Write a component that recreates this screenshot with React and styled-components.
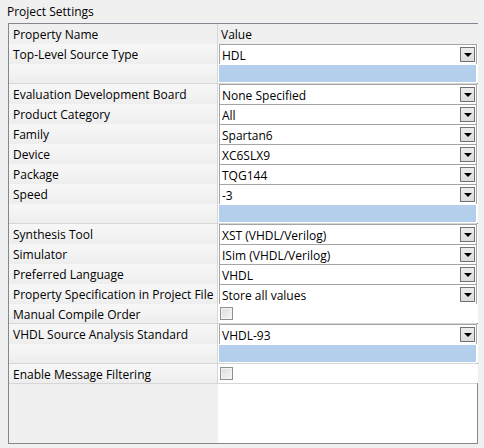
import React from "react";
import styled, { createGlobalStyle } from "styled-components";

const GlobalStyle = createGlobalStyle`
  html, body { margin: 0; padding: 0; background: #f0f0f0; }
  body {
    font-family: "Open Sans", "Liberation Sans", sans-serif;
    font-size: 12px;
    color: #000;
  }
`;

const Panel = styled.div`
  width: 484px;
  height: 448px;
  box-sizing: border-box;
  padding: 3px 6px 4px 8px;
  display: flex;
  flex-direction: column;
`;

const Title = styled.div`
  height: 20px;
  line-height: 17px;
  margin-left: -1px;
`;

const Frame = styled.div`
  flex: 1;
  border: 1px solid #828790;
  display: flex;
  flex-direction: column;
  background: #fff;
`;

const Row = styled.div`
  display: grid;
  grid-template-columns: 209px 260px;
  height: 20px;
  box-sizing: border-box;
  border-bottom: 1px solid #d6d6d6;
`;

const NameCell = styled.div`
  box-sizing: border-box;
  border-right: 1px solid #d6d6d6;
  padding-left: 4px;
  line-height: 21px;
  white-space: nowrap;
  overflow: hidden;
  background: ${(p) =>
    p.$header ? "#f0f0f0" : "linear-gradient(#f7f7f7 0%, #f3f3f3 50%, #ededed 100%)"};
`;

const ValueCell = styled.div`
  box-sizing: border-box;
  display: flex;
  align-items: stretch;
  background: ${(p) => (p.$header ? "#f0f0f0" : "#fff")};
  padding-left: ${(p) => (p.$header ? "3px" : "1px")};
  padding-right: 1px;
  line-height: 21px;
`;

const Combo = styled.div`
  flex: 1;
  box-sizing: border-box;
  display: flex;
  align-items: center;
  border: 1px solid #a5a5a5;
  background: #fff;
  padding-left: 2px;
  padding-right: 1px;
`;

const ComboText = styled.span`
  flex: 1;
  white-space: nowrap;
  line-height: 17px;
  padding-top: 2px;
`;

const DropButton = styled.div`
  width: 15px;
  height: 15px;
  box-sizing: border-box;
  border: 1px solid #707070;
  background: linear-gradient(#ececec, #dcdcdc);
  display: flex;
  align-items: center;
  justify-content: center;
`;

const Arrow = styled.div`
  width: 0;
  height: 0;
  border-left: 4px solid transparent;
  border-right: 4px solid transparent;
  border-top: 4px solid #000;
  margin-top: 1px;
`;

const Blank = styled.div`
  flex: 1;
  background: #b3cfec;
  border: 1px solid #fff;
  margin-left: -1px;
`;

const CheckWrap = styled.div`
  display: flex;
  align-items: center;
  padding-left: 1px;
`;

const CheckBox = styled.div`
  width: 13px;
  height: 13px;
  box-sizing: border-box;
  border: 1px solid #8f8f8f;
  background: linear-gradient(135deg, #dcdcdc, #f6f6f6);
  box-shadow: inset 0 0 0 1px #f4f4f4;
`;

const Filler = styled.div`
  flex: 1;
  display: grid;
  grid-template-columns: 209px 260px;
`;

const FillLeft = styled.div`
  background: #f0f0f0;
`;

const rows = [
  { name: "Top-Level Source Type", type: "combo", value: "HDL" },
  { type: "blank" },
  { name: "Evaluation Development Board", type: "combo", value: "None Specified" },
  { name: "Product Category", type: "combo", value: "All" },
  { name: "Family", type: "combo", value: "Spartan6" },
  { name: "Device", type: "combo", value: "XC6SLX9" },
  { name: "Package", type: "combo", value: "TQG144" },
  { name: "Speed", type: "combo", value: "-3" },
  { type: "blank" },
  { name: "Synthesis Tool", type: "combo", value: "XST (VHDL/Verilog)" },
  { name: "Simulator", type: "combo", value: "ISim (VHDL/Verilog)" },
  { name: "Preferred Language", type: "combo", value: "VHDL" },
  { name: "Property Specification in Project File", type: "combo", value: "Store all values" },
  { name: "Manual Compile Order", type: "check" },
  { name: "VHDL Source Analysis Standard", type: "combo", value: "VHDL-93" },
  { type: "blank" },
  { name: "Enable Message Filtering", type: "check" },
];

function Value({ row }) {
  if (row.type === "combo")
    return (
      <Combo>
        <ComboText>{row.value}</ComboText>
        <DropButton>
          <Arrow />
        </DropButton>
      </Combo>
    );
  if (row.type === "blank") return <Blank />;
  return (
    <CheckWrap>
      <CheckBox />
    </CheckWrap>
  );
}

export default function App() {
  return (
    <>
      <GlobalStyle />
      <Panel>
        <Title>Project Settings</Title>
        <Frame>
          <Row>
            <NameCell $header>Property Name</NameCell>
            <ValueCell $header>Value</ValueCell>
          </Row>
          {rows.map((r, i) => (
            <Row key={i}>
              <NameCell>{r.name || ""}</NameCell>
              <ValueCell>
                <Value row={r} />
              </ValueCell>
            </Row>
          ))}
          <Filler>
            <FillLeft />
            <div />
          </Filler>
        </Frame>
      </Panel>
    </>
  );
}
